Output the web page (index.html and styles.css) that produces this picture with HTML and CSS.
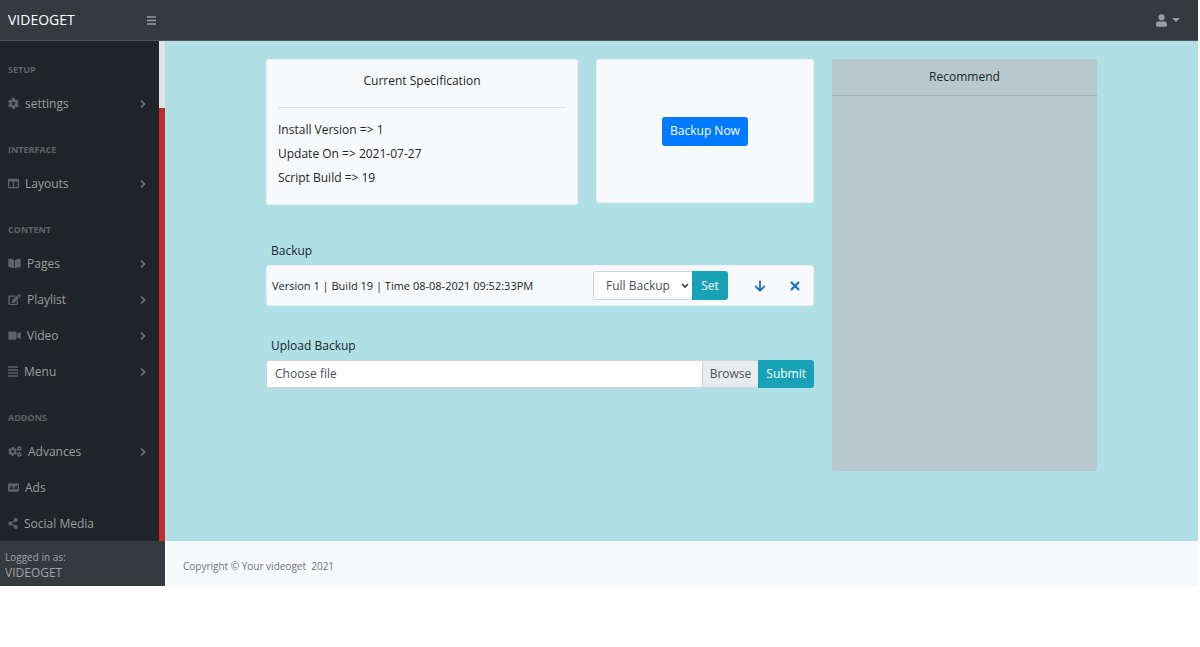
FILE: index.html
```html
<!DOCTYPE html>
<html lang="en">
<head>
<meta charset="utf-8">
<meta name="viewport" content="width=device-width, initial-scale=1">
<title>VIDEOGET</title>
<link rel="stylesheet" href="styles.css">
</head>
<body>
<svg class="sprite" aria-hidden="true">
  <symbol id="chevron" viewBox="0 0 8 10"><path d="M2 1.500 5.500 5 2 8.500" fill="none" stroke="currentColor" stroke-width="1.700"/></symbol>
  <symbol id="cog" viewBox="8 8 496 496"><path fill="currentColor" fill-rule="evenodd" d="M487 316l-43-25c4-23 4-47 0-70l43-25c5-3 7-9 6-14-11-36-30-69-55-96-4-4-10-5-15-2l-43 24c-18-15-39-27-61-35V24c0-6-4-11-9-12-37-8-75-8-111 0-5 1-9 6-9 12v49c-22 8-43 20-61 35L87 84c-5-3-11-2-15 2-25 27-44 60-55 96-2 5 1 11 6 14l43 25c-4 23-4 47 0 70l-43 25c-5 3-8 9-6 14 11 36 30 69 55 96 4 4 10 5 15 2l42-24c18 15 39 27 61 35v49c0 6 4 11 9 12 37 8 75 8 111 0 6-1 9-6 9-12v-49c23-8 43-20 61-35l43 24c5 3 11 2 15-2 25-27 44-60 55-96 1-5-1-11-6-14zM256 336a80 80 0 1 1 0-160 80 80 0 0 1 0 160z"/></symbol>
</svg>
<div class="app">
  <header class="topbar">
    <a class="brand" href="#">VIDEOGET</a>
    <button class="icon-btn" type="button" aria-label="Toggle menu">
      <svg width="9" height="9" viewBox="0 0 9 9"><path d="M0 1h9M0 4.500h9M0 8h9" stroke="currentColor" stroke-width="1.300"/></svg>
    </button>
    <button class="icon-btn user" type="button" aria-label="Account">
      <svg width="11" height="13" viewBox="0 0 448 512"><path fill="currentColor" d="M224 256a128 128 0 1 0 0-256 128 128 0 0 0 0 256zm90 32h-17a174 174 0 0 1-146 0h-17A134 134 0 0 0 0 422v42c0 27 21 48 48 48h352c27 0 48-21 48-48v-42a134 134 0 0 0-134-134z"/></svg>
      <svg width="8" height="4" viewBox="0 0 8 4"><path fill="currentColor" d="M0 0h8L4 4z"/></svg>
    </button>
  </header>
  <div class="body">
    <aside class="sidebar">
      <div class="scroll">
        <nav class="menu">
          <h2 class="group">Setup</h2>
          <a class="item" href="#"><svg width="11" height="11"><use href="#cog"/></svg><span>settings</span><svg class="chev" width="8" height="10"><use href="#chevron"/></svg></a>
          <h2 class="group">Interface</h2>
          <a class="item" href="#"><svg width="11" height="11" viewBox="0 0 512 512"><path fill="currentColor" fill-rule="evenodd" d="M464 32H48C21 32 0 54 0 80v352c0 27 21 48 48 48h416c27 0 48-21 48-48V80c0-26-21-48-48-48zM224 416H64V160h160v256zm224 0H288V160h160v256z"/></svg><span>Layouts</span><svg class="chev" width="8" height="10"><use href="#chevron"/></svg></a>
          <h2 class="group">Content</h2>
          <a class="item" href="#"><svg width="13" height="11" viewBox="0 0 576 512"><path fill="currentColor" d="M542 32c-55 3-164 15-231 56-5 3-7 8-7 13v364c0 11 12 18 22 13 69-35 169-44 219-47 17-1 31-15 31-31V63c0-18-15-32-34-31zM265 88C198 47 89 35 34 32 15 31 0 45 0 63v337c0 16 13 30 31 31 49 3 149 12 218 47 10 5 23-2 23-13V101c0-5-2-10-7-13z"/></svg><span>Pages</span><svg class="chev" width="8" height="10"><use href="#chevron"/></svg></a>
          <a class="item" href="#"><svg width="13" height="11" viewBox="0 0 576 512"><path fill="currentColor" fill-rule="evenodd" d="M403 83l90 90c4 4 4 10 0 14L274 406l-92 10c-13 2-23-9-22-21l10-93L389 83c4-4 10-4 14 0zm162-23l-49-49c-15-15-40-15-55 0l-35 35c-4 4-4 10 0 14l90 90c4 4 10 4 14 0l35-35c15-15 15-40 0-55zM384 346V448H64V128h230c3 0 6-1 9-3l40-40c7-8 2-21-9-21H48C22 64 0 86 0 112v352c0 27 22 48 48 48h352c27 0 48-21 48-48V306c0-11-13-16-21-8l-40 40c-2 2-3 5-3 8z"/></svg><span>Playlist</span><svg class="chev" width="8" height="10"><use href="#chevron"/></svg></a>
          <a class="item" href="#"><svg width="13" height="11" viewBox="0 0 576 512"><path fill="currentColor" d="M336 64H48C21 64 0 85 0 112v288c0 27 21 48 48 48h288c27 0 48-21 48-48V112c0-27-21-48-48-48zm190 38l-110 75v157l110 76c21 15 50 0 50-26V127c0-25-29-40-50-25z"/></svg><span>Video</span><svg class="chev" width="8" height="10"><use href="#chevron"/></svg></a>
          <a class="item" href="#"><svg width="10" height="11" viewBox="0 0 10 11"><path d="M0 1h10M0 4h10M0 7h10M0 10h10" stroke="currentColor" stroke-width="1.300"/></svg><span>Menu</span><svg class="chev" width="8" height="10"><use href="#chevron"/></svg></a>
          <h2 class="group">Addons</h2>
          <a class="item" href="#"><svg width="14" height="11" viewBox="0 0 640 512"><use href="#cog" x="0" y="45" width="420" height="420"/><use href="#cog" x="405" y="0" width="235" height="235"/><use href="#cog" x="405" y="277" width="235" height="235"/></svg><span>Advances</span><svg class="chev" width="8" height="10"><use href="#chevron"/></svg></a>
          <a class="item" href="#"><svg width="11" height="11" viewBox="0 0 512 512"><path fill="currentColor" fill-rule="evenodd" d="M464 64H48C21 64 0 85 0 112v288c0 27 21 48 48 48h416c27 0 48-21 48-48V112c0-27-21-48-48-48zM60 350l68-190h58l68 190h-50l-10-30h-74l-10 30zm75-72h44l-22-66zM400 160h48v190h-48v-10c-50 30-110 0-110-60s60-90 110-62zm-30 92a28 28 0 1 0 0 56 28 28 0 0 0 0-56z"/></svg><span>Ads</span></a>
          <a class="item" href="#"><svg width="10" height="11" viewBox="0 0 448 512"><path d="M352 96 96 256l256 160" fill="none" stroke="currentColor" stroke-width="60"/><g fill="currentColor"><circle cx="352" cy="96" r="94"/><circle cx="96" cy="256" r="94"/><circle cx="352" cy="416" r="94"/></g></svg><span>Social Media</span></a>
        </nav>
        <div class="track"><div class="thumb"></div></div>
      </div>
      <div class="logged"><small>Logged in as:</small><span>VIDEOGET</span></div>
    </aside>
    <div class="content">
      <main class="main">
        <div class="container">
          <div class="left">
            <div class="cards">
              <section class="card spec">
                <h1 class="title">Current Specification</h1>
                <p>Install Version =&gt; 1</p>
                <p>Update On =&gt; 2021-07-27</p>
                <p>Script Build =&gt; 19</p>
              </section>
              <section class="card now"><button class="btn primary" type="button">Backup Now</button></section>
            </div>
            <h2 class="label">Backup</h2>
            <div class="card row">
              <span class="name">Version 1 | Build 19 | Time 08-08-2021 09:52:33PM</span>
              <div class="set">
                <div class="pick">
                  <select class="select" aria-label="Backup type"><option>Full Backup</option></select>
                  <svg class="caret" width="8" height="6" viewBox="0 0 8 6"><path d="M1 1l3 3 3-3" fill="none" stroke="currentColor" stroke-width="1.600"/></svg>
                </div>
                <button class="btn info end" type="button">Set</button>
              </div>
              <div class="actions">
                <a href="#" aria-label="Download"><svg width="12" height="12" viewBox="0 0 12 12"><path d="M6 .5v10M1.300 6 6 10.700 10.700 6" fill="none" stroke="currentColor" stroke-width="1.800"/></svg></a>
                <a href="#" aria-label="Delete"><svg width="10" height="10" viewBox="0 0 10 10"><path d="M1 1l8 8M9 1 1 9" stroke="currentColor" stroke-width="2.300"/></svg></a>
              </div>
            </div>
            <label class="label upload" for="file">Upload Backup</label>
            <form class="file-row">
              <div class="file">
                <span class="chosen">Choose file</span><span class="browse">Browse</span>
                <input id="file" type="file">
              </div>
              <button class="btn info end" type="button">Submit</button>
            </form>
          </div>
          <section class="recommend"><h2 class="rec-title">Recommend</h2></section>
        </div>
      </main>
      <footer class="footer">Copyright © Your videoget&nbsp; 2021</footer>
    </div>
  </div>
</div>
</body>
</html>
```
FILE: styles.css
```css
* { box-sizing: border-box; }
body {
  margin: 0;
  background: #fff;
  color: #212529;
  font: 12px/18px "Open Sans", "Noto Sans", sans-serif;
}
h1, h2, p { margin: 0; font-size: inherit; font-weight: 400; }
a { color: inherit; text-decoration: none; }
button, select, input { font: inherit; }
button { cursor: pointer; }
svg { display: block; flex: none; }
.sprite { position: absolute; width: 0; height: 0; }
.app { margin-right: 2px; }

.topbar {
  display: flex;
  align-items: center;
  height: 41px;
  padding: 0 18px 0 8px;
  background: #343a40;
  border-bottom: 1px solid #4b565d;
}
.brand { width: 139px; color: #fff; font-size: 14px; }
.icon-btn {
  display: flex;
  align-items: center;
  gap: 5px;
  padding: 0;
  border: 0;
  background: none;
  color: #999ca0;
}
.user { margin-left: auto; }

.body { display: flex; }
.sidebar { display: flex; flex-direction: column; width: 165px; flex: none; }
.scroll { display: flex; flex: 1; background: #212529; }
.menu { flex: 1; }
.track { width: 6px; background: #c52b2b; }
.thumb { height: 67px; background: #e2e2e2; }
.group {
  padding: 22px 8px 8px;
  color: #606366;
  font-size: 9px;
  font-weight: 700;
  line-height: 14px;
  text-transform: uppercase;
}
.item {
  display: flex;
  align-items: center;
  gap: 6px;
  height: 36px;
  padding: 1px 12px 0 8px;
  color: #9b9d9f;
}
.item svg { color: #606366; }
.item .chev { margin-left: auto; color: #74777a; }
.logged {
  display: flex;
  flex-direction: column;
  height: 45px;
  padding: 8px 5px;
  background: #343a40;
  color: #a0a3a6;
  line-height: 16px;
}
.logged small { font-size: 10px; }

.content { display: flex; flex: 1; flex-direction: column; min-width: 0; }
.main { flex: 1; padding: 18px; background: #b0e0e6; }
.container { display: flex; gap: 18px; max-width: 831px; margin: 0 auto; }
.left { flex: 1; min-width: 0; }
.recommend {
  width: 265px;
  min-height: 412px;
  border-radius: 3px;
  background: #b7c8ce;
}
.rec-title {
  padding: 9px;
  border-bottom: 1px solid #a0afb4;
  text-align: center;
}
.cards { display: flex; gap: 18px; align-items: flex-start; }
.card { border: 1px solid #eceff1; border-radius: 3px; background: #f8f9fa; }
.spec { flex: 1; padding: 12px 11px 14px; }
.spec p { line-height: 24px; }
.title {
  margin-bottom: 10px;
  padding-bottom: 17px;
  border-bottom: 1px solid #dee0e1;
  text-align: center;
}
.now { display: flex; align-items: center; justify-content: center; width: 218px; height: 144px; }
.btn { height: 29px; padding: 0 8px; border: 0; border-radius: 3px; color: #fff; }
.primary { background: #007bff; }
.info { background: #17a2b8; }
.end { border-radius: 0 3px 3px 0; }
.label { display: block; padding: 0 5px; }
.cards + .label { margin: 37px 0 5px; }
.upload { margin: 31px 0 5px; }
.row { display: flex; align-items: center; height: 41px; padding: 0 13px 0 5px; }
.name { flex: 1; font-size: 11px; white-space: nowrap; }
.set { display: flex; }
.set .btn { width: 36px; }
.pick { position: relative; }
.select {
  appearance: none;
  width: 99px;
  height: 29px;
  padding: 0 12px;
  border: 1px solid #ced4da;
  border-right: 0;
  border-radius: 3px 0 0 3px;
  background: #fff;
  color: #495057;
}
.caret { position: absolute; top: 12px; right: 3px; color: #343a40; pointer-events: none; }
.actions { display: flex; align-items: center; gap: 24px; margin-left: 26px; color: #1673d1; }
.file-row { display: flex; }
.file {
  position: relative;
  display: flex;
  flex: 1;
  height: 28px;
  border: 1px solid #ced4da;
  border-right: 0;
  border-radius: 3px 0 0 3px;
  background: #fff;
  color: #495057;
  line-height: 26px;
}
.chosen { flex: 1; padding: 0 8px; }
.browse { padding: 0 7px; border-left: 1px solid #ced4da; background: #e9ecef; }
.file input { position: absolute; inset: 0; width: 100%; opacity: 0; }
.file-row .btn { height: 28px; }
.footer {
  height: 45px;
  padding: 16px 18px 11px;
  background: #f8f9fa;
  color: #6c757d;
  font-size: 10px;
}
```
